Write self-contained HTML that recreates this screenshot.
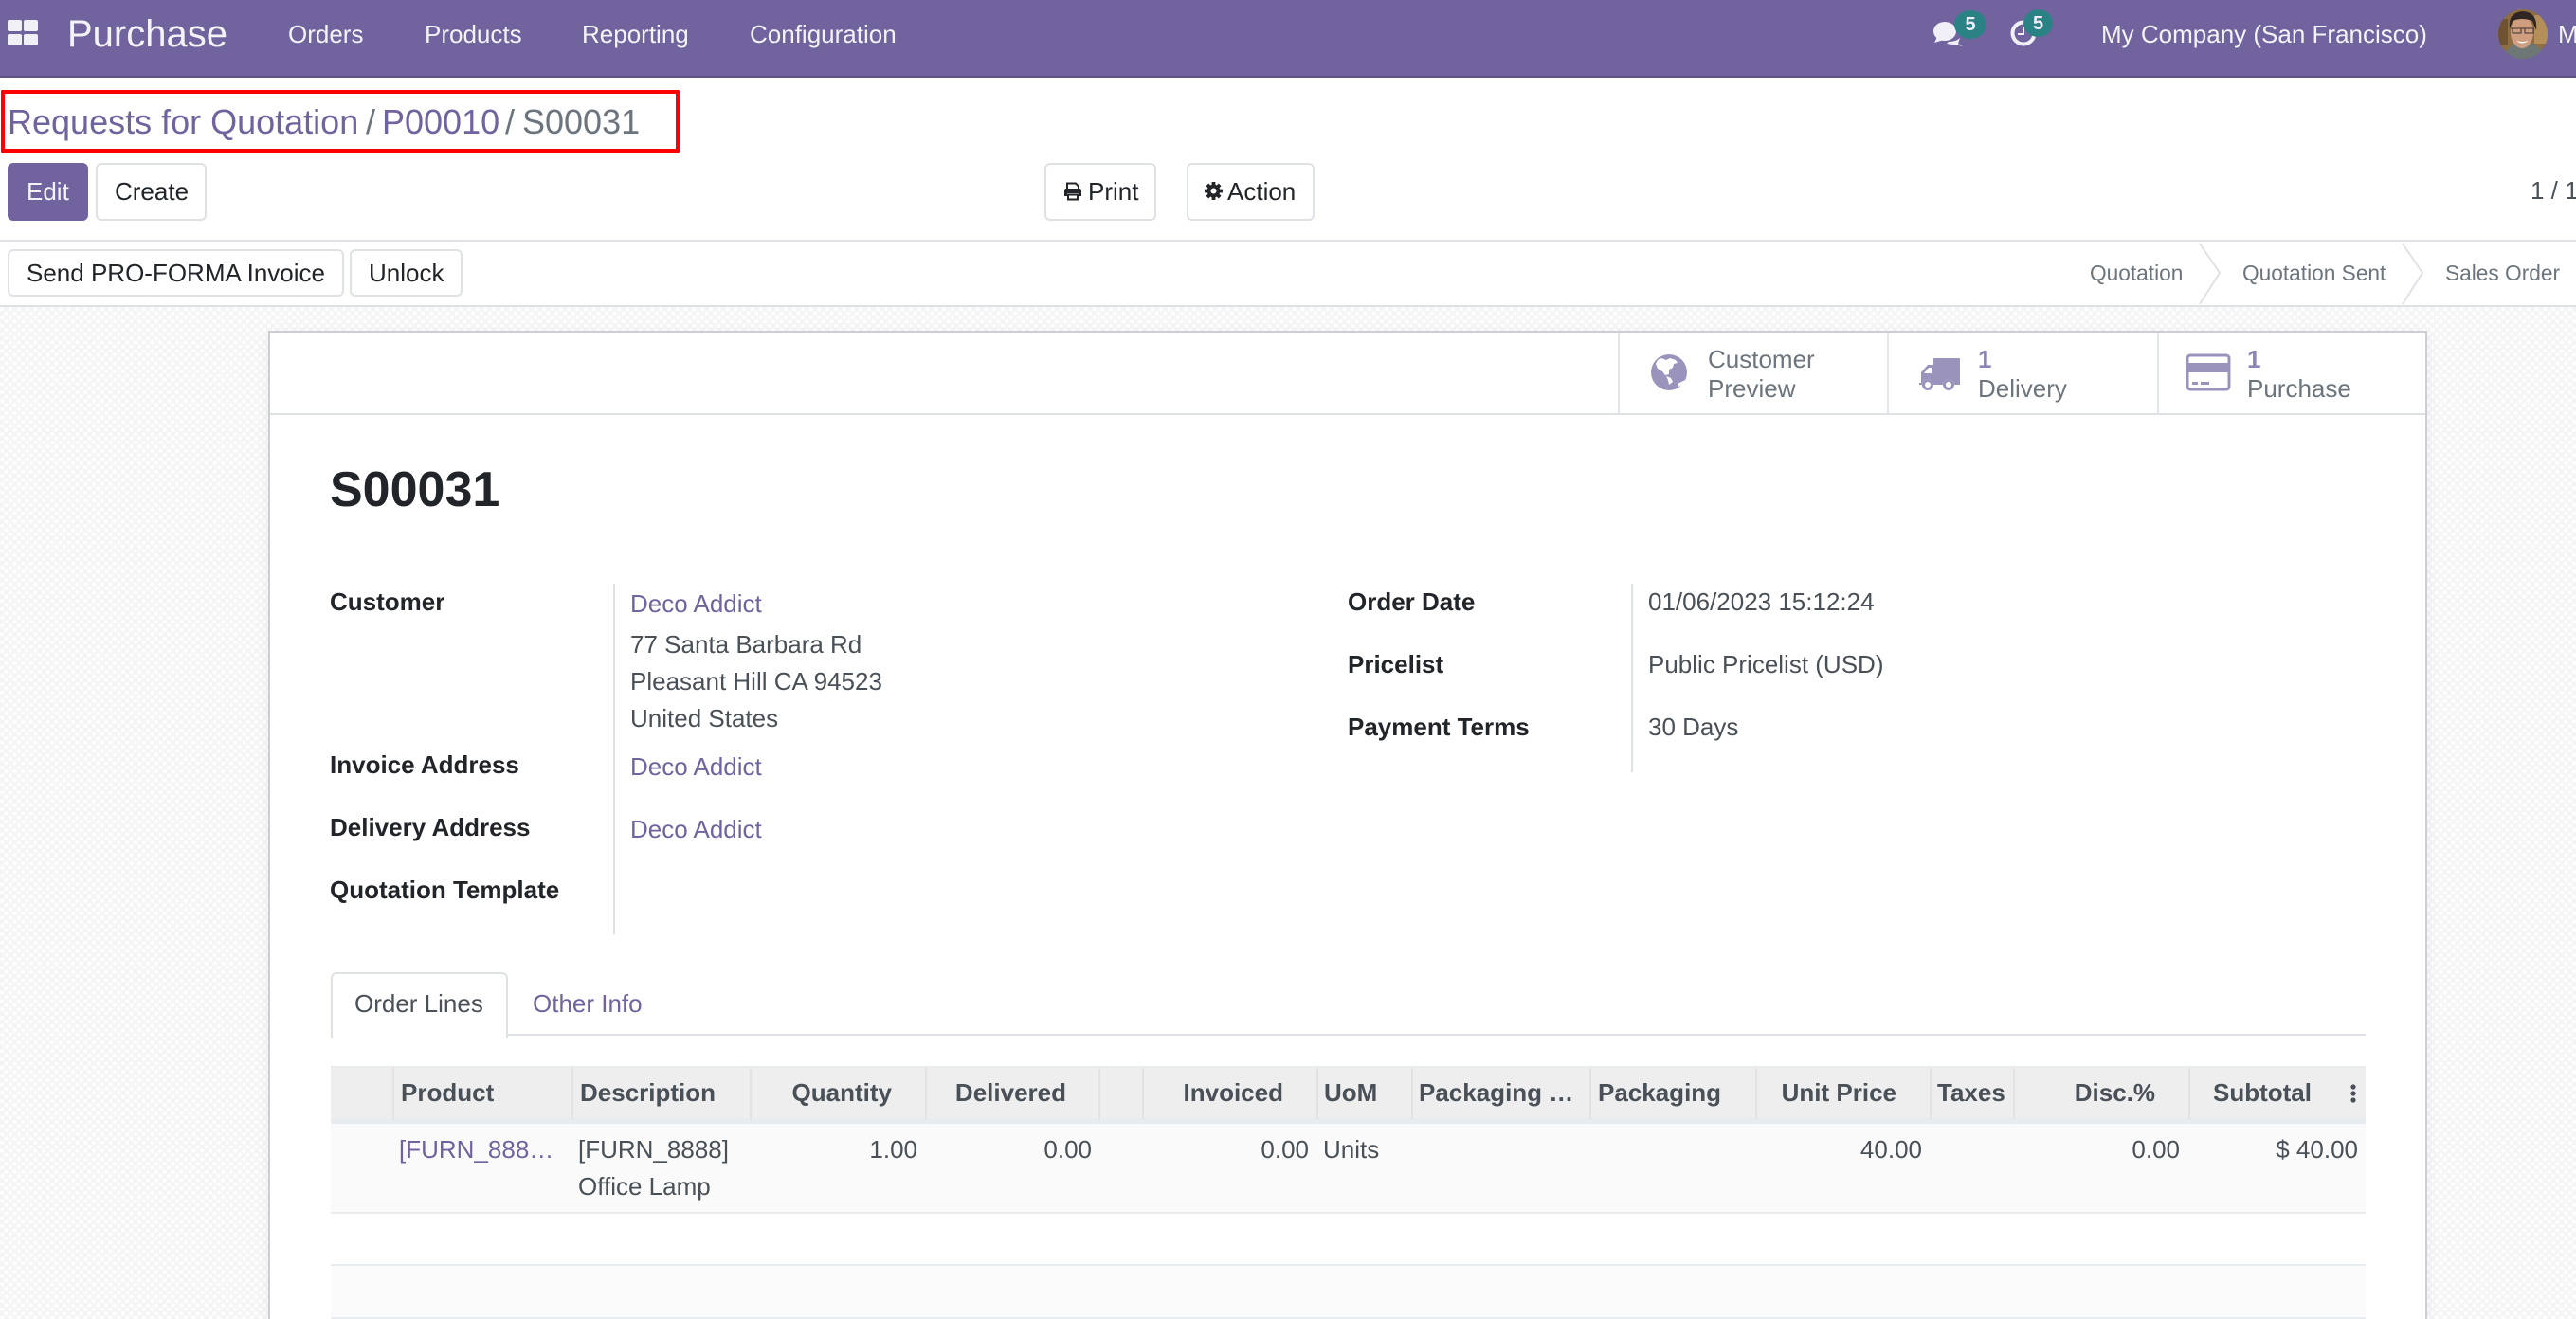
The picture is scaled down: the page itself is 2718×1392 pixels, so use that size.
<!DOCTYPE html>
<html lang="en"><head><meta charset="utf-8"><title>Purchase</title>
<style>
html,body{margin:0;padding:0;background:#fff;width:2718px;height:1392px;overflow:hidden}
#page{width:2718px;height:1392px;position:relative;overflow:hidden;font-family:"Liberation Sans",sans-serif;font-size:26px;color:#495057}
.a{position:absolute}
.t{position:absolute;line-height:30px;height:30px;white-space:nowrap}
.r{text-align:right;transform:translateX(-100%)}
.nav{color:#f4f3f8}
.btn{position:absolute;box-sizing:border-box;border:2px solid #dee2e6;border-radius:6px;background:#fff}
.b{font-weight:700}
.lbl{font-weight:700;color:#212529}
.lnk{color:#71639e}
.h{font-weight:700;color:#495057}
.sep{position:absolute;top:1127px;height:55px;width:2px;background:#e2e3e5}
svg{position:absolute;display:block}
</style></head><body><div id="page">

<!-- navbar -->
<div class="a" style="left:0;top:0;width:2718px;height:80px;background:#71639e;border-bottom:2px solid #5f5385"></div>
<div class="a" style="left:8px;top:21px;width:15px;height:12px;background:#f1f0f7;border-radius:2px"></div>
<div class="a" style="left:25px;top:21px;width:15px;height:12px;background:#f1f0f7;border-radius:2px"></div>
<div class="a" style="left:8px;top:36px;width:15px;height:12px;background:#f1f0f7;border-radius:2px"></div>
<div class="a" style="left:25px;top:36px;width:15px;height:12px;background:#f1f0f7;border-radius:2px"></div>
<div class="t nav" style="left:71px;top:21px;font-size:40px">Purchase</div>
<div class="t nav" style="left:304px;top:21px">Orders</div>
<div class="t nav" style="left:448px;top:21px">Products</div>
<div class="t nav" style="left:614px;top:21px">Reporting</div>
<div class="t nav" style="left:791px;top:21px">Configuration</div>

<svg style="left:2038px;top:20px" width="36" height="30" viewBox="0 0 36 30"><ellipse cx="14" cy="13" rx="12" ry="10" fill="#f1f0f7"/><path d="M6 19 L3 25 L13 22Z" fill="#f1f0f7"/><path d="M18 24 Q26 24 30 20 L28 26 L33 29 L25 27 Q20 27 16 26Z" fill="#f1f0f7"/></svg>
<div class="a" style="left:2062px;top:11px;width:34px;height:30px;border-radius:50%;background:#2b8285"></div>
<div class="t" style="left:2062px;top:11px;width:34px;text-align:center;font-size:20px;color:#eef;font-weight:700">5</div>
<svg style="left:2120px;top:19px" width="32" height="32" viewBox="0 0 32 32"><circle cx="15" cy="16" r="11.5" fill="none" stroke="#f1f0f7" stroke-width="4"/><path d="M15 9V17H9" fill="none" stroke="#f1f0f7" stroke-width="2"/></svg>
<div class="a" style="left:2135px;top:10px;width:31px;height:29px;border-radius:50%;background:#2b8285"></div>
<div class="t" style="left:2135px;top:10px;width:31px;text-align:center;font-size:20px;color:#eef;font-weight:700">5</div>

<div class="t nav" style="left:2217px;top:21px">My Company (San Francisco)</div>
<svg style="left:2636px;top:10px" width="52" height="52" viewBox="0 0 52 52">
<defs><clipPath id="av"><circle cx="26" cy="26" r="26"/></clipPath></defs>
<g clip-path="url(#av)"><rect width="52" height="52" fill="#8e6d42"/><rect x="38" y="6" width="14" height="30" fill="#b48f5a"/><rect x="0" y="10" width="10" height="28" fill="#6e5231"/>
<path d="M4 52 Q10 38 20 36 L36 36 Q46 40 50 52Z" fill="#6d7876"/><ellipse cx="25" cy="24" rx="12" ry="17" fill="#cf9d80"/><path d="M12 20 Q10 3 26 2 Q42 3 40 22 L36 12 Q25 8 15 12Z" fill="#2f2623"/><path d="M13 20H38M15 20h9v5h-9zM28 20h9v5h-9z" fill="none" stroke="#3a3536" stroke-width="1"/><path d="M19 33Q25 38 32 33Q25 35 19 33Z" fill="#fff"/></g></svg>
<div class="t nav" style="left:2699px;top:21px">M</div>

<!-- breadcrumb -->
<div class="a" style="left:1px;top:95px;width:708px;height:58px;border:4px solid #f00;border-radius:1px"></div>
<div class="t lnk" style="left:8px;top:114px;font-size:36px">Requests for Quotation</div>
<div class="t" style="left:386px;top:114px;font-size:36px;color:#6c757d">/</div>
<div class="t lnk" style="left:403px;top:114px;font-size:36px">P00010</div>
<div class="t" style="left:533px;top:114px;font-size:36px;color:#6c757d">/</div>
<div class="t" style="left:551px;top:114px;font-size:36px;color:#6c757d">S00031</div>

<!-- control buttons -->
<div class="btn" style="left:8px;top:172px;width:85px;height:61px;background:#71639e;border-color:#71639e"></div>
<div class="t" style="left:28px;top:187px;color:#f4f3f8">Edit</div>
<div class="btn" style="left:101px;top:172px;width:117px;height:61px"></div>
<div class="t" style="left:121px;top:187px;color:#212529">Create</div>
<div class="btn" style="left:1102px;top:172px;width:118px;height:61px"></div>
<svg style="left:1122px;top:192px" width="20" height="20" viewBox="0 0 20 20"><path d="M4 8V1.5H13L16 4.5V8" fill="none" stroke="#212529" stroke-width="2"/><path d="M1 9a2 2 0 0 1 2-2H17a2 2 0 0 1 2 2V15H16V12H4V15H1Z" fill="#212529"/><path d="M5 13.5H15V18.5H5Z" fill="none" stroke="#212529" stroke-width="2"/></svg>
<div class="t" style="left:1148px;top:187px;color:#212529">Print</div>
<div class="btn" style="left:1252px;top:172px;width:135px;height:61px"></div>
<svg style="left:1271px;top:192px" width="19" height="19" viewBox="0 0 20 20"><circle cx="10" cy="10" r="5.2" fill="none" stroke="#212529" stroke-width="4"/><g stroke="#212529" stroke-width="4"><path d="M10 0V4M10 16V20M0 10H4M16 10H20M3 3L5.5 5.5M14.5 14.5L17 17M3 17L5.5 14.5M14.5 5.5L17 3"/></g></svg>
<div class="t" style="left:1295px;top:187px;color:#212529">Action</div>
<div class="t" style="left:2670px;top:186px;color:#495057">1 / 1</div>

<div class="a" style="left:0;top:253px;width:2718px;height:2px;background:#dee2e6"></div>

<!-- statusbar -->
<div class="btn" style="left:8px;top:263px;width:355px;height:50px"></div>
<div class="t" style="left:28px;top:273px;color:#212529">Send PRO-FORMA Invoice</div>
<div class="btn" style="left:369px;top:263px;width:119px;height:50px"></div>
<div class="t" style="left:389px;top:273px;color:#212529">Unlock</div>
<div class="t" style="left:2205px;top:273px;font-size:22.7px;color:#6c757d">Quotation</div>
<div class="t" style="left:2366px;top:273px;font-size:22.7px;color:#6c757d">Quotation Sent</div>
<div class="t" style="left:2580px;top:273px;font-size:22.7px;color:#6c757d">Sales Order</div>
<svg style="left:2318px;top:255px" width="240" height="70" viewBox="0 0 240 70"><path d="M3 2L24 33L3 66M217 2L238 33L217 66" fill="none" stroke="#dee2e6" stroke-width="2"/></svg>

<div class="a" style="left:0;top:322px;width:2718px;height:2px;background:#dee2e6"></div>

<!-- textured background -->
<div class="a" style="left:0;top:324px;width:2718px;height:1068px;background-color:#f5f5f5;background-image:radial-gradient(circle at 2.2px 2.2px,#fff 0,#fff 1.6px,transparent 2.6px),radial-gradient(circle at 6.6px 6.6px,#fff 0,#fff 1.6px,transparent 2.6px);background-size:8.8px 8.8px"></div>

<!-- sheet -->
<div class="a" style="left:283px;top:349px;width:2274px;height:1100px;box-sizing:content-box;background:#fff;border:solid #ccced6;border-width:2px 2px 0 2px;box-shadow:0 3px 14px rgba(0,0,0,.06)"></div>

<!-- stat buttons -->
<div class="a" style="left:285px;top:436px;width:2274px;height:2px;background:#dee2e6"></div>
<div class="a" style="left:1707px;top:351px;width:2px;height:85px;background:#e4e7ea"></div>
<div class="a" style="left:1991px;top:351px;width:2px;height:85px;background:#e4e7ea"></div>
<div class="a" style="left:2276px;top:351px;width:2px;height:85px;background:#e4e7ea"></div>

<svg style="left:1742px;top:374px" width="38" height="38" viewBox="0 0 38 38"><circle cx="19" cy="19" r="19" fill="#9a94bd"/><path d="M7 6L11 4L16 6L20 4L26 6L28 9L24 10L23 14L19 16L19 21L15 22L12 18L7 15L5 10Z" fill="#fff"/><path d="M16 23L21 25L23 29L19 32L18 27Z M28 31L36 27L34 32L29 34Z" fill="#fff"/></svg>
<div class="t" style="left:1802px;top:364px;color:#6c757d">Customer</div>
<div class="t" style="left:1802px;top:395px;color:#6c757d">Preview</div>

<svg style="left:2025px;top:377px" width="44" height="36" viewBox="0 0 44 36"><path d="M15 2a1 1 0 0 1 1-1H42a1 1 0 0 1 1 1V29H37a6 6 0 0 0-12 0H15a6 6 0 0 0-12 0H0V27H2V16L9 8H15Z" fill="#9a94bd"/><circle cx="9" cy="29" r="4.5" fill="#fff" stroke="#9a94bd" stroke-width="3"/><circle cx="31" cy="29" r="4.5" fill="#fff" stroke="#9a94bd" stroke-width="3"/><path d="M5 17L10 11H13V17Z" fill="#fff"/></svg>
<div class="t b" style="left:2087px;top:364px;color:#8f84b7">1</div>
<div class="t" style="left:2087px;top:395px;color:#6c757d">Delivery</div>

<svg style="left:2306px;top:373px" width="48" height="40" viewBox="0 0 48 40"><rect x="2" y="2" width="44" height="36" rx="3" fill="none" stroke="#9a94bd" stroke-width="3"/><rect x="2" y="10" width="44" height="10" fill="#9a94bd"/><rect x="7" y="30" width="6" height="3" fill="#9a94bd"/><rect x="16" y="30" width="9" height="3" fill="#9a94bd"/></svg>
<div class="t b" style="left:2371px;top:364px;color:#8f84b7">1</div>
<div class="t" style="left:2371px;top:395px;color:#6c757d">Purchase</div>

<!-- title -->
<div class="t b" style="left:348px;top:502px;font-size:52px;color:#212529">S00031</div>

<!-- left group -->
<div class="a" style="left:647px;top:616px;width:2px;height:370px;background:#dee2e6"></div>
<div class="t lbl" style="left:348px;top:620px">Customer</div>
<div class="t lbl" style="left:348px;top:792px">Invoice Address</div>
<div class="t lbl" style="left:348px;top:858px">Delivery Address</div>
<div class="t lbl" style="left:348px;top:924px">Quotation Template</div>
<div class="t lnk" style="left:665px;top:622px">Deco Addict</div>
<div class="t" style="left:665px;top:665px">77 Santa Barbara Rd</div>
<div class="t" style="left:665px;top:704px">Pleasant Hill CA 94523</div>
<div class="t" style="left:665px;top:743px">United States</div>
<div class="t lnk" style="left:665px;top:794px">Deco Addict</div>
<div class="t lnk" style="left:665px;top:860px">Deco Addict</div>

<!-- right group -->
<div class="a" style="left:1721px;top:616px;width:2px;height:199px;background:#dee2e6"></div>
<div class="t lbl" style="left:1422px;top:620px">Order Date</div>
<div class="t lbl" style="left:1422px;top:686px">Pricelist</div>
<div class="t lbl" style="left:1422px;top:752px">Payment Terms</div>
<div class="t" style="left:1739px;top:620px">01/06/2023 15:12:24</div>
<div class="t" style="left:1739px;top:686px">Public Pricelist (USD)</div>
<div class="t" style="left:1739px;top:752px">30 Days</div>

<!-- tabs -->
<div class="a" style="left:349px;top:1091px;width:2147px;height:2px;background:#dee2e6"></div>
<div class="a" style="left:349px;top:1026px;width:183px;height:67px;background:#fff;border:2px solid #dee2e6;border-bottom:0;border-radius:6px 6px 0 0"></div>
<div class="t" style="left:374px;top:1044px">Order Lines</div>
<div class="t lnk" style="left:562px;top:1044px">Other Info</div>

<!-- table -->
<div class="a" style="left:349px;top:1125px;width:2147px;height:55px;background:#eeeeee;border-top:2px solid #e9ecef;box-sizing:border-box"></div>
<div class="a" style="left:349px;top:1180px;width:2147px;height:6px;background:#e9ecef"></div>
<div class="sep" style="left:414px"></div><div class="sep" style="left:603px"></div><div class="sep" style="left:791px"></div><div class="sep" style="left:976px"></div><div class="sep" style="left:1159px"></div><div class="sep" style="left:1205px"></div><div class="sep" style="left:1389px"></div><div class="sep" style="left:1489px"></div><div class="sep" style="left:1677px"></div><div class="sep" style="left:1852px"></div><div class="sep" style="left:2036px"></div><div class="sep" style="left:2124px"></div><div class="sep" style="left:2309px"></div>
<div class="t h" style="left:423px;top:1138px">Product</div>
<div class="t h" style="left:612px;top:1138px">Description</div>
<div class="t h r" style="left:941px;top:1138px">Quantity</div>
<div class="t h r" style="left:1125px;top:1138px">Delivered</div>
<div class="t h r" style="left:1354px;top:1138px">Invoiced</div>
<div class="t h" style="left:1397px;top:1138px">UoM</div>
<div class="t h" style="left:1497px;top:1138px">Packaging …</div>
<div class="t h" style="left:1686px;top:1138px">Packaging</div>
<div class="t h r" style="left:2001px;top:1138px">Unit Price</div>
<div class="t h" style="left:2044px;top:1138px">Taxes</div>
<div class="t h r" style="left:2274px;top:1138px">Disc.%</div>
<div class="t h r" style="left:2439px;top:1138px">Subtotal</div>
<svg style="left:2480px;top:1144px" width="6" height="20" viewBox="0 0 6 20"><circle cx="3" cy="3" r="2.6" fill="#495057"/><circle cx="3" cy="10" r="2.6" fill="#495057"/><circle cx="3" cy="17" r="2.6" fill="#495057"/></svg>

<div class="a" style="left:349px;top:1186px;width:2147px;height:93px;background:#fafafa"></div>
<div class="a" style="left:349px;top:1279px;width:2147px;height:2px;background:#e9ecef"></div>
<div class="a" style="left:349px;top:1334px;width:2147px;height:2px;background:#e9ecef"></div>
<div class="a" style="left:349px;top:1336px;width:2147px;height:54px;background:#fbfbfb"></div>
<div class="a" style="left:349px;top:1390px;width:2147px;height:2px;background:#e9ecef"></div>

<div class="t lnk" style="left:421px;top:1198px">[FURN_888…</div>
<div class="t" style="left:610px;top:1198px">[FURN_8888]</div>
<div class="t" style="left:610px;top:1237px">Office Lamp</div>
<div class="t r" style="left:968px;top:1198px">1.00</div>
<div class="t r" style="left:1152px;top:1198px">0.00</div>
<div class="t r" style="left:1381px;top:1198px">0.00</div>
<div class="t" style="left:1396px;top:1198px">Units</div>
<div class="t r" style="left:2028px;top:1198px">40.00</div>
<div class="t r" style="left:2300px;top:1198px">0.00</div>
<div class="t r" style="left:2488px;top:1198px">$ 40.00</div>

</div></body></html>
